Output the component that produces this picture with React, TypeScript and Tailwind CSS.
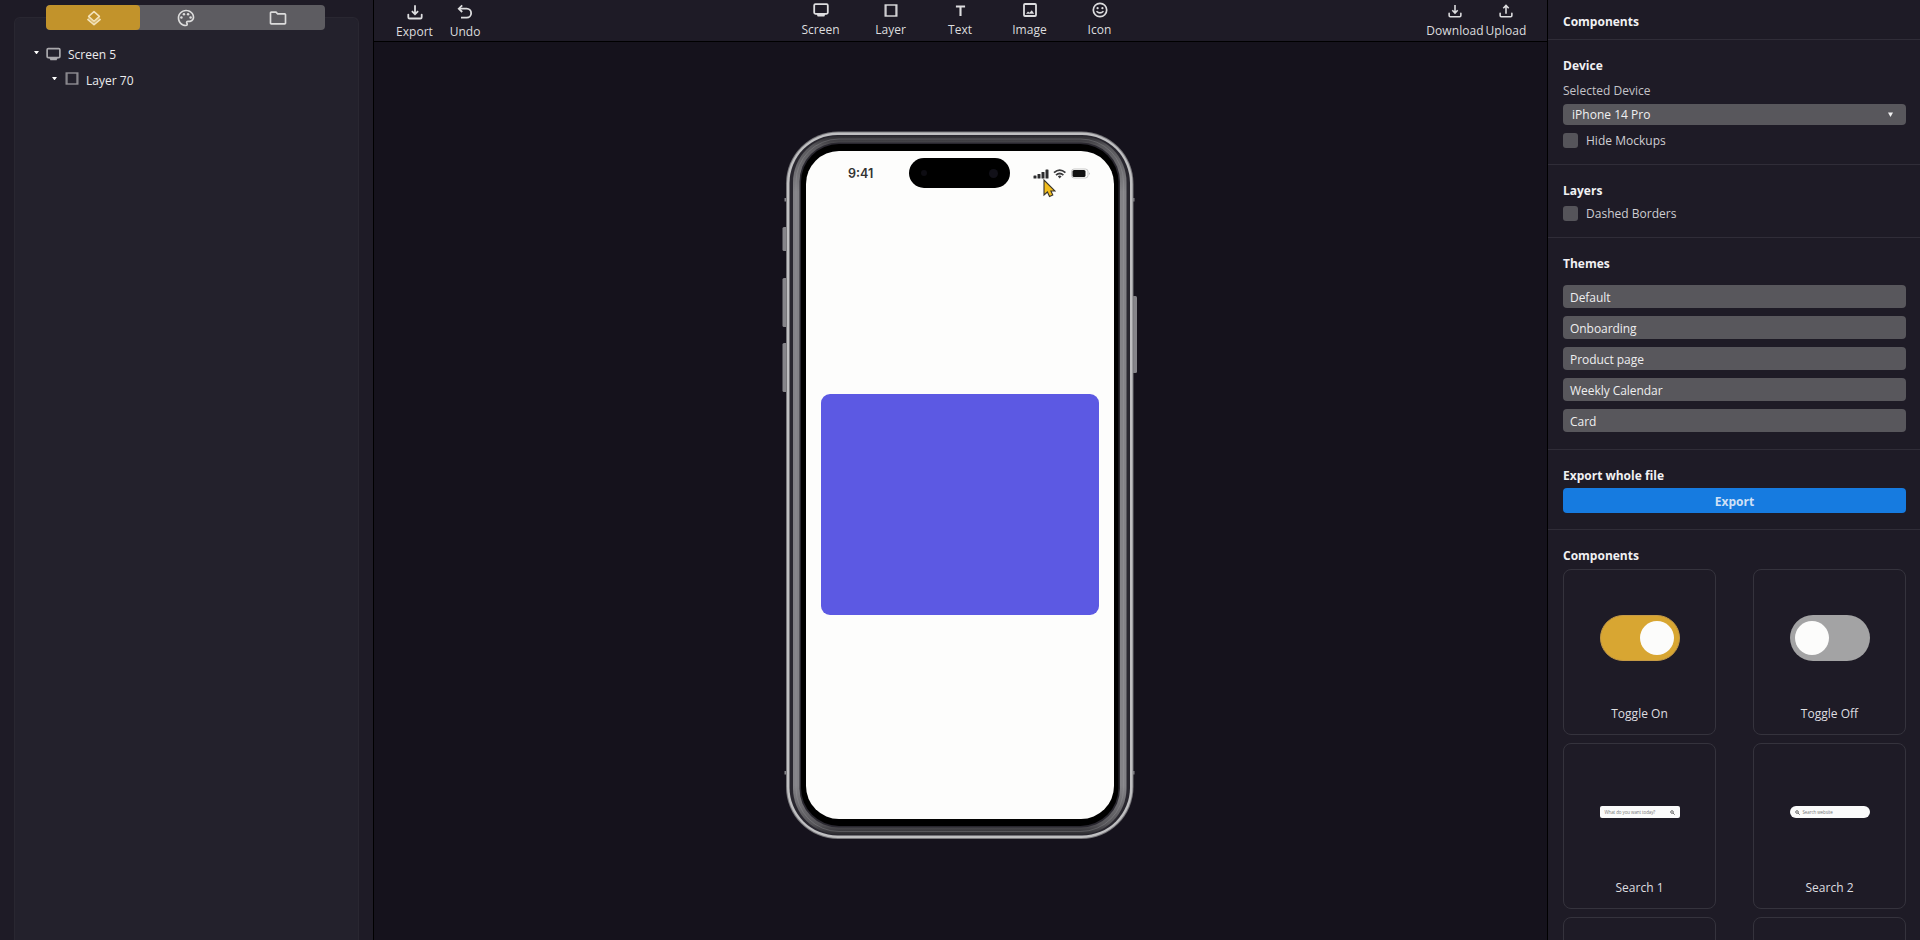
import React from "react";
import { MdOutlinePalette, MdOutlineFolder } from "react-icons/md";

type IconProps = { className?: string };

const stroke = {
  fill: "none",
  stroke: "currentColor",
  strokeWidth: 1.8,
  strokeLinecap: "round" as const,
  strokeLinejoin: "round" as const,
};

const DownloadIcon = ({ className }: IconProps) => (
  <svg viewBox="0 0 16 16" className={className} {...stroke}>
    <path d="M8 1.2V10M4.9 7.2 8 10.3l3.1-3.1" strokeLinecap="butt" strokeLinejoin="miter" />
    <path d="M1.3 10.6v2.6q0 1.3 1.3 1.3h10.8q1.3 0 1.3-1.3v-2.6" />
  </svg>
);

const UploadIcon = ({ className }: IconProps) => (
  <svg viewBox="0 0 16 16" className={className} {...stroke}>
    <path d="M8 11V2M4.9 4.8 8 1.7l3.1 3.1" strokeLinecap="butt" strokeLinejoin="miter" />
    <path d="M1.3 10.6v2.6q0 1.3 1.3 1.3h10.8q1.3 0 1.3-1.3v-2.6" />
  </svg>
);

const UndoIcon = ({ className }: IconProps) => (
  <svg viewBox="0 0 16 16" className={className} {...stroke}>
    <path d="M5.2 1.4 1.8 4.7 5.2 8" strokeLinecap="butt" strokeLinejoin="miter" />
    <path d="M2.5 4.7h7.2a4.4 4.4 0 0 1 0 8.9H4" strokeLinecap="butt" />
  </svg>
);

const LayersIcon = ({ className }: IconProps) => (
  <svg viewBox="0 0 16 16" className={className} fill="none" stroke="currentColor" strokeLinejoin="round">
    <path d="M8 1.6 13.4 6.400 8 11.200 2.600 6.400z" strokeWidth="1.500" />
    <path d="M1.400 9.200 8 14.600l6.600-5.400" strokeWidth="1.700" />
    <path d="M2.200 7.800 8 12.600l5.800-4.800" strokeWidth="1.200" strokeOpacity="0.550" />
  </svg>
);

const ScreenIcon = ({ className }: IconProps) => (
  <svg viewBox="0 0 16 14" className={className}>
    <rect x="1.2" y="1.2" width="13.6" height="9.6" rx="1.2" fill="none" stroke="currentColor" strokeWidth="1.8" />
    <path d="M3.5 11h9l-1.2 2.6H4.7z" fill="currentColor" />
  </svg>
);

const LayerIcon = ({ className }: IconProps) => (
  <svg viewBox="0 0 14 13" className={className} fill="none" stroke="currentColor">
    <rect x="1.2" y="1" width="11.6" height="11" strokeWidth="1.4" />
    <path d="M2.3 1v11M11.7 1v11" strokeWidth="0.8" />
  </svg>
);

const TextIcon = ({ className }: IconProps) => (
  <svg viewBox="0 0 12 12" className={className} fill="none" stroke="currentColor" strokeWidth="2.3">
    <path d="M1 1.6h10M6 1.6V12" />
  </svg>
);

const ImageIcon = ({ className }: IconProps) => (
  <svg viewBox="0 0 14 14" className={className}>
    <rect x="1" y="1" width="12" height="12" rx="1" fill="none" stroke="currentColor" strokeWidth="1.8" />
    <path d="M3 10.8 5 8.6l1.5 1.2 2.3-2.6 2.4 3.6z" fill="currentColor" />
  </svg>
);

const FaceIcon = ({ className }: IconProps) => (
  <svg viewBox="0 0 16 16" className={className} fill="none" stroke="currentColor">
    <circle cx="8" cy="8" r="6.7" strokeWidth="1.7" />
    <circle cx="5.6" cy="6.2" r="1.1" fill="currentColor" stroke="none" />
    <circle cx="10.4" cy="6.2" r="1.1" fill="currentColor" stroke="none" />
    <path d="M4.5 9.2q3.500 3.400 7 0" strokeWidth="1.500" />
  </svg>
);

const Caret = () => (
  <svg viewBox="0 0 6 4" className="h-[3.5px] w-[5px] text-white">
    <path d="M0 0h6L3 4z" fill="currentColor" />
  </svg>
);

const SearchGlyph = ({ className }: IconProps) => (
  <svg viewBox="0 0 6 6" className={className} fill="none" stroke="#444" strokeWidth="0.9">
    <circle cx="2.4" cy="2.4" r="1.6" />
    <path d="M3.6 3.6 5.6 5.6" />
  </svg>
);

function LeftSidebar() {
  return (
    <aside className="relative flex w-[373px] shrink-0 flex-col bg-[#1e1b26] pt-[17px] pr-[14px] pl-[14px]">
      <div className="flex-1 rounded-t-[6px] border border-b-0 border-[#292731] bg-[#23212c] pt-[26px] font-medium">
        <div className="flex h-[22px] items-center pl-[19px]">
          <span className="-mt-[5px] w-[12px]"><Caret /></span>
          <ScreenIcon className="-mt-[3px] h-[14px] w-[15px] text-[#aaa9ad]" />
          <span className="ml-[7px]">Screen 5</span>
        </div>
        <div className="mt-[4px] flex h-[22px] items-center pl-[37px]">
          <span className="-mt-[5px] w-[13px]"><Caret /></span>
          <LayerIcon className="-mt-[5px] h-[13px] w-[14px] text-[#8f8e93]" />
          <span className="ml-[7px]">Layer 70</span>
        </div>
      </div>
      <div className="absolute top-[5px] left-[46px] flex h-[25px] w-[279px] overflow-hidden rounded-[4px] bg-[#5d5c61] text-[#dcdcdc]">
        <div className="flex w-[94px] items-center justify-center rounded-[4px] bg-[#c2932b] pl-[1px] text-[#f3e3bb]">
          <LayersIcon className="size-[16px]" />
        </div>
        <div className="flex flex-1 items-center justify-center pr-[1px]"><MdOutlinePalette size={20} /></div>
        <div className="flex flex-1 items-center justify-center pr-[2px]"><MdOutlineFolder size={20} /></div>
      </div>
    </aside>
  );
}

type ToolProps = { label: string; width: string; children: React.ReactNode; drop?: string };

function Tool({ label, width, children, drop = "pt-[2px]" }: ToolProps) {
  return (
    <div className={`flex flex-col items-center ${width} ${drop}`}>
      <div className="flex h-[16px] items-center justify-center">{children}</div>
      <span className="mt-[4px] leading-[16px]">{label}</span>
    </div>
  );
}

function TopBar() {
  return (
    <header className="flex h-[42px] shrink-0 justify-between border-b border-black bg-[#1e1b26] text-[#dddddf]">
      <div className="flex w-[300px] pl-[15px]">
        <Tool label="Export" width="w-[51px]" drop="pt-[4px]"><DownloadIcon className="size-[16px]" /></Tool>
        <Tool label="Undo" width="w-[50px]" drop="pt-[4px]"><UndoIcon className="size-[16px]" /></Tool>
      </div>
      <div className="-ml-[1px] flex">
        <Tool label="Screen" width="w-[70px]"><ScreenIcon className="h-[14px] w-[16px]" /></Tool>
        <Tool label="Layer" width="w-[70px]"><LayerIcon className="h-[13px] w-[14px]" /></Tool>
        <Tool label="Text" width="w-[69px]"><TextIcon className="size-[11px]" /></Tool>
        <Tool label="Image" width="w-[70px]"><ImageIcon className="size-[14px]" /></Tool>
        <Tool label="Icon" width="w-[70px]"><FaceIcon className="size-[16px]" /></Tool>
      </div>
      <div className="flex w-[300px] justify-end pr-[17px] tracking-[0.1px]">
        <Tool label="Download" width="w-[54px]" drop="pt-[3px]"><DownloadIcon className="size-[14px]" /></Tool>
        <Tool label="Upload" width="w-[48px]" drop="pt-[3px]"><UploadIcon className="size-[14px]" /></Tool>
      </div>
    </header>
  );
}

function PhoneFrame() {
  return (
    <svg viewBox="0 0 356 712" className="absolute inset-0 h-[712px] w-[356px]">
      <defs>
        <linearGradient id="band" x1="0" y1="0" x2="0" y2="1">
          <stop offset="0" stopColor="#2c2b30" />
          <stop offset="0.014" stopColor="#57565a" />
          <stop offset="0.08" stopColor="#838286" />
          <stop offset="0.93" stopColor="#838286" />
          <stop offset="0.985" stopColor="#57565a" />
          <stop offset="1" stopColor="#2c2b30" />
        </linearGradient>
      </defs>
      <g fill="#86858a">
        <rect x="0.5" y="97" width="5" height="24" rx="1.5" />
        <rect x="0.5" y="148" width="5" height="49" rx="1.5" />
        <rect x="0.5" y="213" width="5" height="49" rx="1.5" />
        <rect x="350" y="166" width="5" height="77" rx="1.5" />
        <rect x="2.5" y="68" width="350" height="3.5" />
        <rect x="2.5" y="641" width="350" height="3.5" />
      </g>
      <rect x="4" y="1.5" width="347.5" height="707.5" rx="52" fill="#77767a" />
      <rect x="5" y="2.5" width="345.5" height="705.5" rx="51" fill="#bfbfc1" />
      <rect x="7.5" y="5" width="340.5" height="700.5" rx="48" fill="#29272f" />
      <rect x="11" y="6" width="333.5" height="698.5" rx="46" fill="url(#band)" />
      <rect x="14" y="9" width="327.5" height="692.5" rx="43" fill="none" stroke="#a3a2a6" strokeWidth="1" strokeOpacity="0.3" />
      <rect x="17.5" y="12.5" width="320.5" height="685" rx="39" fill="#29272f" />
      <rect x="19" y="14" width="317.5" height="682" rx="38" fill="#000" />
    </svg>
  );
}

function StatusBar() {
  return (
    <div className="flex h-[44px] items-center pt-[1px] text-[#333]">
      <span className="w-[103px] pl-[42px] font-[Inter,sans-serif] text-[12.5px] font-semibold tracking-[0px]">9:41</span>
      <div className="-mt-[1px] flex h-[30px] w-[101px] items-center justify-between rounded-full bg-black px-[12px]">
        <span className="size-[6px] rounded-full bg-[#0d0c12]" />
        <span className="size-[9px] rounded-full bg-[#111018]" />
      </div>
      <svg viewBox="0 0 60 12" className="ml-[23px] h-[12px] w-[60px]">
        <g fill="#2c2c2e">
          <rect x="0.5" y="7.5" width="3" height="3" rx="0.6" />
          <rect x="4.5" y="6" width="3" height="4.5" rx="0.6" />
          <rect x="8.5" y="4" width="3" height="6.5" rx="0.6" />
          <rect x="12.5" y="1.5" width="3" height="9" rx="0.6" />
        </g>
        <g fill="none" stroke="#39393b" strokeWidth="1.8">
          <path d="M21 4.6q5.7-5 11.400 0" />
          <path d="M23 7.100q3.700-3.200 7.400 0" />
        </g>
        <path d="M24.800 8.300q1.900-1.500 3.800 0L26.700 10.400z" fill="#39393b" />
        <rect x="38.500" y="1" width="16.500" height="9" rx="2.600" fill="none" stroke="#bbb" strokeWidth="0.800" />
        <rect x="39.500" y="2" width="13" height="7" rx="1.600" fill="#111" />
        <path d="M56.300 4.200q1.600 1.300 0 2.800z" fill="#aaa" />
      </svg>
    </div>
  );
}

function Pointer() {
  return (
    <svg viewBox="0 0 13 19" className="absolute top-[49px] left-[261px] h-[19px] w-[13px]">
      <path d="M1 1v15l3.400-3 2.100 4.600 3.300-1.500-1.900-4.100h4.100z" fill="#f2bd1d" stroke="#38342c" strokeWidth="1.100" />
    </svg>
  );
}

function Canvas() {
  return (
    <main className="flex flex-1 justify-center overflow-hidden bg-[#15121c] pt-[88px] pr-[1px]">
      <div className="relative h-[712px] w-[356px] pt-[21px] pl-[24px]">
        <PhoneFrame />
        <div className="relative flex h-[668px] w-[308px] flex-col overflow-hidden rounded-[33px] bg-[#fdfdfc]">
          <StatusBar />
          <div className="mx-[15px] mt-[199px] h-[221px] rounded-[9px] bg-[#5c59e3]" />
        </div>
        <Pointer />
      </div>
    </main>
  );
}

const Check = ({ label }: { label: string }) => (
  <label className="flex h-[15px] items-center text-[#cfced2]">
    <span className="size-[15px] rounded-[3px] bg-[#55545a]" />
    <span className="ml-[8px] pt-[1px]">{label}</span>
  </label>
);

const Heading = ({ children }: { children: React.ReactNode }) => (
  <h2 className="text-[12px] leading-[16px] font-bold tracking-[0px] text-[#f1f1f3]">{children}</h2>
);

const themes = ["Default", "Onboarding", "Product page", "Weekly Calendar", "Card"];

function Card({ label, children }: { label?: string; children?: React.ReactNode }) {
  return (
    <div className="flex h-[166px] w-[153px] flex-col items-center rounded-[8px] border border-[#35333d]">
      <div className="flex h-[136px] items-center">{children}</div>
      <span className="leading-[16px] text-[#dedee0]">{label}</span>
    </div>
  );
}

function RightSidebar() {
  return (
    <aside className="flex w-[373px] shrink-0 flex-col overflow-hidden border-l border-black bg-[#1e1b26]">
      <section className="h-[40px] shrink-0 border-b border-[#302d38] pt-[14px] pl-[15px]"><Heading>Components</Heading></section>
      <section className="h-[125px] shrink-0 border-b border-[#302d38] pt-[18px] pr-[14px] pl-[15px]">
        <Heading>Device</Heading>
        <div className="mt-[9px] leading-[16px] text-[#c4c3c8]">Selected Device</div>
        <div className="mt-[5px] flex h-[21px] items-center justify-between rounded-[4px] bg-[#58575c] pr-[13px] pl-[9px] text-[#f0f0f1]">
          <span className="pt-[1px] font-medium">iPhone 14 Pro</span>
          <svg viewBox="0 0 6 6" className="size-[5px]"><path d="M0 0.500h6L3 6z" fill="currentColor" /></svg>
        </div>
        <div className="mt-[8px]"><Check label="Hide Mockups" /></div>
      </section>
      <section className="h-[73px] shrink-0 border-b border-[#302d38] pt-[18px] pl-[15px]">
        <Heading>Layers</Heading>
        <div className="mt-[7px]"><Check label="Dashed Borders" /></div>
      </section>
      <section className="h-[212px] shrink-0 border-b border-[#302d38] pt-[18px] pr-[14px] pl-[15px]">
        <Heading>Themes</Heading>
        <div className="mt-[13px] flex flex-col gap-[8px]">
          {themes.map((t) => (
            <div key={t} className="flex h-[23px] items-center rounded-[4px] bg-[#58575c] pt-[2px] pl-[7px] font-medium tracking-[-0.05px] text-[#eeeeef]">{t}</div>
          ))}
        </div>
      </section>
      <section className="h-[80px] shrink-0 border-b border-[#302d38] pt-[18px] pr-[14px] pl-[15px]">
        <Heading>Export whole file</Heading>
        <button className="mt-[4px] flex h-[25px] w-full items-center justify-center rounded-[4px] bg-[#167be0] pt-[3px] font-bold text-[#cfe0f6]">Export</button>
      </section>
      <section className="shrink-0 pt-[18px] pr-[14px] pl-[15px]">
        <Heading>Components</Heading>
        <div className="mt-[5px] grid grid-cols-[153px_153px] justify-between gap-y-[8px]">
          <Card label="Toggle On">
            <div className="flex h-[46px] w-[80px] items-center justify-end rounded-full border border-[#c59a45] bg-[#d8a632] pr-[5px]">
              <span className="size-[34px] rounded-full bg-[#fcfcfb]" />
            </div>
          </Card>
          <Card label="Toggle Off">
            <div className="flex h-[46px] w-[80px] items-center rounded-full bg-[#a3a3a4] pl-[5px]">
              <span className="size-[34px] rounded-full bg-[#fcfcfb]" />
            </div>
          </Card>
          <Card label="Search 1">
            <div className="flex h-[12px] w-[80px] items-center justify-between rounded-[2px] bg-[#fbfbfb] px-[5px]">
              <span className="text-[4.5px] leading-[6px] tracking-[-0.1px] whitespace-nowrap text-[#777]">What do you want today?</span>
              <SearchGlyph className="size-[5px]" />
            </div>
          </Card>
          <Card label="Search 2">
            <div className="flex h-[12px] w-[80px] items-center rounded-full bg-[#fbfbfb] px-[5px]">
              <SearchGlyph className="size-[5px]" />
              <span className="ml-[3px] text-[4.5px] leading-[6px] tracking-[-0.1px] whitespace-nowrap text-[#777]">Search website</span>
            </div>
          </Card>
          <Card />
          <Card />
        </div>
      </section>
    </aside>
  );
}

export default function App() {
  return (
    <div className="flex h-[940px] w-[1920px] overflow-hidden bg-[#15121c] font-['Open_Sans','Noto_Sans',sans-serif] text-[12px] leading-[16px] tracking-[0.02px] text-[#ececee]">
      <LeftSidebar />
      <div className="flex min-w-0 flex-1 flex-col border-l border-black">
        <TopBar />
        <Canvas />
      </div>
      <RightSidebar />
    </div>
  );
}
